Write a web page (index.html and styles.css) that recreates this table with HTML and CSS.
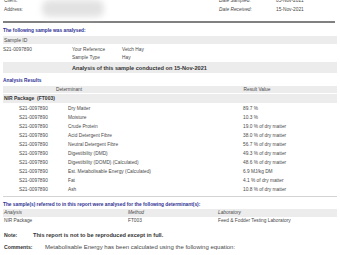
FILE: index.html
```html
<!DOCTYPE html>
<html>
<head>
<meta charset="utf-8">
<link rel="stylesheet" href="styles.css">
</head>
<body>
<div class="page">
  <div class="head">
    <div class="client">
      <div class="kv"><span class="lbl">Client:</span></div>
      <div class="kv"><span class="lbl">Address:</span></div>
      <div class="redact"></div>
    </div>
    <div class="dates">
      <div class="kv"><span class="dlbl">Date Sampled:</span><span>05-Nov-2021</span></div>
      <div class="kv"><span class="dlbl">Date Received:</span><span>15-Nov-2021</span></div>
    </div>
  </div>
  <div class="rule"></div>

  <div class="sec">The following sample was analysed:</div>
  <div class="bar">Sample ID</div>
  <div class="sample">
    <span>S21-0097890</span><span>Your Reference</span><span>Vetch Hay</span>
    <span></span><span>Sample Type</span><span>Hay</span>
  </div>
  <div class="band"><span>Analysis of this sample conducted on 15-Nov-2021</span></div>

  <div class="sec">Analysis Results</div>
  <div class="thead"><span class="th-det">Determinant</span><span class="th-res">Result Value</span></div>
  <div class="pkg">NIR Package&nbsp; (FT003)</div>
  <div class="results">
    <span>S21-0097890</span><span>Dry Matter</span><span>89.7 %</span>
    <span>S21-0097890</span><span>Moisture</span><span>10.3 %</span>
    <span>S21-0097890</span><span>Crude Protein</span><span>19.0 % of dry matter</span>
    <span>S21-0097890</span><span>Acid Detergent Fibre</span><span>38.0 % of dry matter</span>
    <span>S21-0097890</span><span>Neutral Detergent Fibre</span><span>56.7 % of dry matter</span>
    <span>S21-0097890</span><span>Digestibility (DMD)</span><span>49.3 % of dry matter</span>
    <span>S21-0097890</span><span>Digestibility (DOMD) (Calculated)</span><span>48.6 % of dry matter</span>
    <span>S21-0097890</span><span>Est. Metabolisable Energy (Calculated)</span><span>6.9 MJ/kg DM</span>
    <span>S21-0097890</span><span>Fat</span><span>4.1 % of dry matter</span>
    <span>S21-0097890</span><span>Ash</span><span>10.8 % of dry matter</span>
  </div>
  <div class="thin"></div>

  <div class="sec sec2">The sample(s) referred to in this report were analysed for the following determinant(s):</div>
  <div class="methods mhead"><span>Analysis</span><span>Method</span><span>Laboratory</span></div>
  <div class="methods"><span>NIR Package</span><span>FT003</span><span>Feed &amp; Fodder Testing Laboratory</span></div>

  <div class="note"><span class="nlbl">Note:</span><span class="ntext">This report is not to be reproduced except in full.</span></div>
  <div class="note cmt"><span class="nlbl clbl">Comments:</span><span class="ctext">Metabolisable Energy has been calculated using the following equation:</span></div>
</div>
</body>
</html>
```
FILE: styles.css
```css
* { box-sizing: border-box; }
html, body { margin: 0; padding: 0; background: #fff; }
body { width: 340px; height: 255px; overflow: hidden; }
.page {
  font-family: "Liberation Sans", Arial, sans-serif;
  font-size: 4.8px;
  color: #4a4a4a;
  padding: 0 3px;
  margin-top: -5px;
}
.head { display: flex; justify-content: space-between; height: 26px; padding-top: 1px; }
.client { position: relative; width: 150px; padding-left: 1px; }
.kv { display: flex; line-height: 9px; }
.lbl { width: 40px; }
.redact {
  position: absolute; left: 39px; top: 4px; width: 62px; height: 17px;
  background: #e2e2e2; border-radius: 7px; filter: blur(3px);
}
.dates { width: 118px; }
.dlbl { width: 57px; font-style: italic; }
.rule { height: 2px; background: #808080; margin-right: 2px; }
.sec { color: #2e3192; font-weight: bold; line-height: 8px; margin-top: 4px; }
.bar { background: #ececec; line-height: 8px; margin-top: 1px; padding-left: 1px; font-size: 5px; }
.sample {
  display: grid; grid-template-columns: 69px 50px 1fr;
  line-height: 8px; padding-top: 2px;
}
.band { background: #ececec; height: 11px; padding-left: 69px; display: flex; align-items: center; }
.band span { font-weight: bold; font-size: 5.6px; color: #333; }
.sec + .thead { margin-top: 1px; }
.thead {
  display: grid; grid-template-columns: 132px 1fr;
  background: #ececec; line-height: 7px; text-align: center;
}
.th-res { padding-left: 42px; }
.pkg { background: #ececec; font-weight: bold; font-size: 5px; line-height: 9px; margin-top: 1px; color: #333; padding-left: 1px; }
.results {
  display: grid; grid-template-columns: 49px 175px 1fr;
  padding-left: 16px; line-height: 9px; padding-top: 1px;
}
.thin { height: 1px; background: #d4d4d4; margin-top: 2px; }
.sec2 { margin-top: 4px; }
.methods { display: grid; grid-template-columns: 124px 90px 1fr; line-height: 8px; padding-left: 1px; }
.mhead { background: #ececec; font-style: italic; }
.note { display: flex; align-items: baseline; line-height: 9px; margin-top: 6px; }
.cmt { margin-top: 3px; }
.nlbl { width: 30px; font-weight: bold; color: #333; padding-left: 1px; font-size: 5.2px; }
.clbl { width: 42px; }
.ntext { font-weight: bold; font-size: 5.6px; color: #333; }
.ctext { font-size: 6px; }
```
